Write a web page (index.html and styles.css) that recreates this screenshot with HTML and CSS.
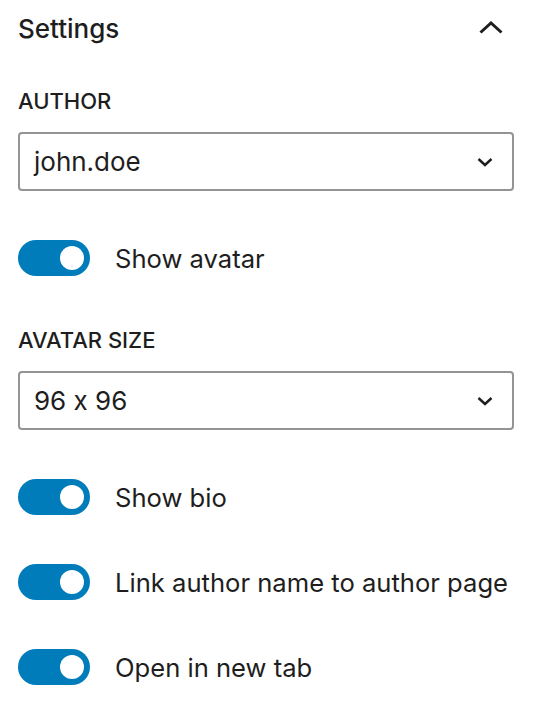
FILE: index.html
```html
<!DOCTYPE html>
<html lang="en">
<head>
    <meta charset="UTF-8">
    <meta name="viewport" content="width=device-width, initial-scale=1.0">
    <title>Author settings</title>
    <link rel="stylesheet" href="styles.css">
</head>
<body>
    <div class="panel">
        <!-- panel header -->
        <div class="panel-header">
            <h2>Settings</h2>
            <svg class="chevron-up" width="24" height="14" viewBox="0 0 24 14">
                <polyline points="1.5,11.5 12,2 22.5,11.5" fill="none" stroke="#1e1e1e" stroke-width="3"/>
            </svg>
        </div>

        <div class="field">
            <label class="field-label">Author</label>
            <div class="select">
                <span>john.doe</span>
                <svg width="16" height="10" viewBox="0 0 16 10">
                    <polyline points="1.5,2 8,8 14.5,2" fill="none" stroke="#1e1e1e" stroke-width="2.4"/>
                </svg>
            </div>
        </div>

        <div class="toggle-row">
            <span class="toggle"><span class="thumb"></span></span>
            <span class="toggle-label">Show avatar</span>
        </div>

        <div class="field">
            <label class="field-label">Avatar size</label>
            <div class="select">
                <span>96 x 96</span>
                <svg width="16" height="10" viewBox="0 0 16 10">
                    <polyline points="1.5,2 8,8 14.5,2" fill="none" stroke="#1e1e1e" stroke-width="2.4"/>
                </svg>
            </div>
        </div>

        <div class="toggle-row">
            <span class="toggle"><span class="thumb"></span></span>
            <span class="toggle-label">Show bio</span>
        </div>
        <div class="toggle-row">
            <span class="toggle"><span class="thumb"></span></span>
            <span class="toggle-label">Link author name to author page</span>
        </div>
        <div class="toggle-row">
            <span class="toggle"><span class="thumb"></span></span>
            <span class="toggle-label">Open in new tab</span>
        </div>
    </div>
</body>
</html>
```

FILE: styles.css
```css
body {
    margin: 0;
    background: #fff;
    font-family: Inter, "Noto Sans", sans-serif;
    font-feature-settings: "calt" 0;
    color: #1e1e1e;
}
.panel {
    width: 496px;
    padding: 0 26px 0 18px;
}
.panel-header {
    height: 56px;
    display: flex;
    align-items: center;
    justify-content: space-between;
}
.panel-header h2 {
    margin: 0;
    font-size: 26px;
    font-weight: 500;
}
.chevron-up {
    margin-right: 11px;
}
.field {
    margin-top: 52px;
}
.panel-header + .field {
    margin-top: 33px;
}
.field-label {
    display: block;
    height: 24px;
    line-height: 24px;
    margin-bottom: 19px;
    font-size: 22px;
    font-weight: 500;
    text-transform: uppercase;
}
.select {
    height: 59px;
    box-sizing: border-box;
    border: 2px solid #949494;
    border-radius: 4px;
    display: flex;
    align-items: center;
    justify-content: space-between;
    padding: 0 19px 0 14px;
    font-size: 26px;
}
.toggle-row {
    display: flex;
    align-items: center;
    height: 36px;
    margin-top: 49px;
}
.toggle {
    width: 72px;
    height: 36px;
    border-radius: 18px;
    background: #007cba;
    display: flex;
    align-items: center;
    justify-content: flex-end;
    padding-right: 6px;
    box-sizing: border-box;
    flex-shrink: 0;
}
.thumb {
    width: 24px;
    height: 24px;
    border-radius: 50%;
    background: #fff;
}
.toggle-label {
    margin-left: 25px;
    font-size: 25.6px;
}
```
